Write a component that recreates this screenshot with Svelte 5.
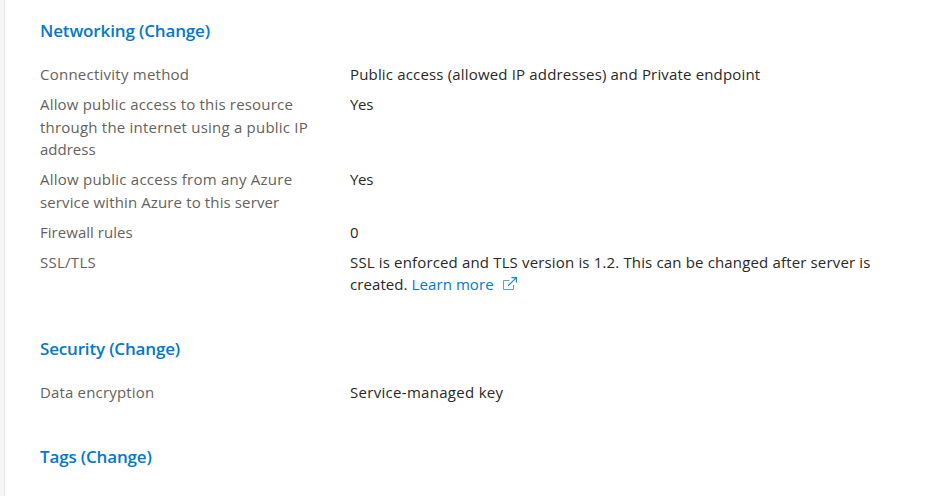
<script>
  // Each line is [text, letter spacing in px, optional link text].
  const sections = [
    {
      title: 'Networking (Change)',
      spacing: -0.145,
      rows: [
        {
          label: [['Connectivity method', 0.24]],
          value: [['Public access (allowed IP addresses) and Private endpoint', 0.168]]
        },
        {
          label: [
            ['Allow public access to this resource', 0.182],
            ['through the internet using a public IP', 0.216],
            ['address', 0]
          ],
          value: [['Yes', -0.3]]
        },
        {
          label: [
            ['Allow public access from any Azure', 0.235],
            ['service within Azure to this server', 0.128]
          ],
          value: [['Yes', -0.3]]
        },
        { label: [['Firewall rules', 0.04]], value: [['0', 0]] },
        {
          label: [['SSL/TLS', 0.272]],
          value: [
            ['SSL is enforced and TLS version is 1.2. This can be changed after server is', 0.155],
            ['created.', 0.08, 'Learn more']
          ]
        }
      ]
    },
    {
      title: 'Security (Change)',
      spacing: -0.172,
      rows: [
        { label: [['Data encryption', 0.165]], value: [['Service-managed key', 0.3]] }
      ]
    },
    { title: 'Tags (Change)', spacing: -0.16, rows: [] }
  ];
</script>

{#snippet textLines(lines)}
  {#each lines as [text, spacing, link]}
    <div class="line" style:letter-spacing="{spacing}px">
      {text}{#if link}{' '}<a href="#learn">{link}<svg
            class="external"
            viewBox="0 0 14 13"
            width="14"
            height="13"
            fill="none"
            aria-hidden="true"
          >
            <path d="M6.5 3.5h-6v9h10V8" stroke="#50a3e0" />
            <path d="M5 8.8 13.2.8M8.5.6h4.9v4.9" stroke="#1580d6" stroke-width="1.1" />
          </svg></a>{/if}
    </div>
  {/each}
{/snippet}

<main>
  {#each sections as section}
    <section>
      <h2 style:letter-spacing="{section.spacing}px">{section.title}</h2>
      {#each section.rows as row}
        <div class="row">
          <div class="label">{@render textLines(row.label)}</div>
          <div class="value">{@render textLines(row.value)}</div>
        </div>
      {/each}
    </section>
  {/each}
</main>

<style>
  :global(body) {
    background: #fff;
    overflow: hidden;
  }
  main {
    box-sizing: border-box;
    height: 496px;
    overflow: hidden;
    padding: 19.4px 0 0 35px;
    border-left: 1px solid #e3e3e3;
    box-shadow: -4px 0 #f6f6f6;
    margin-left: 4px;
    font: 15px/22.5px 'Open Sans', 'Noto Sans', sans-serif;
    color: #292827;
  }
  section {
    margin-bottom: 33.9px;
  }
  h2 {
    margin: 0 0 20.1px;
    font-size: 17px;
    font-weight: 600;
    line-height: 24px;
    color: #0078d4;
  }
  .row {
    display: flex;
    padding-bottom: 7.5px;
  }
  .label {
    width: 310px;
    flex: none;
    color: #646260;
  }
  .line {
    white-space: nowrap;
  }
  a {
    color: #0078d4;
    text-decoration: none;
  }
  .external {
    margin-left: 9px;
    vertical-align: 0;
  }
</style>
